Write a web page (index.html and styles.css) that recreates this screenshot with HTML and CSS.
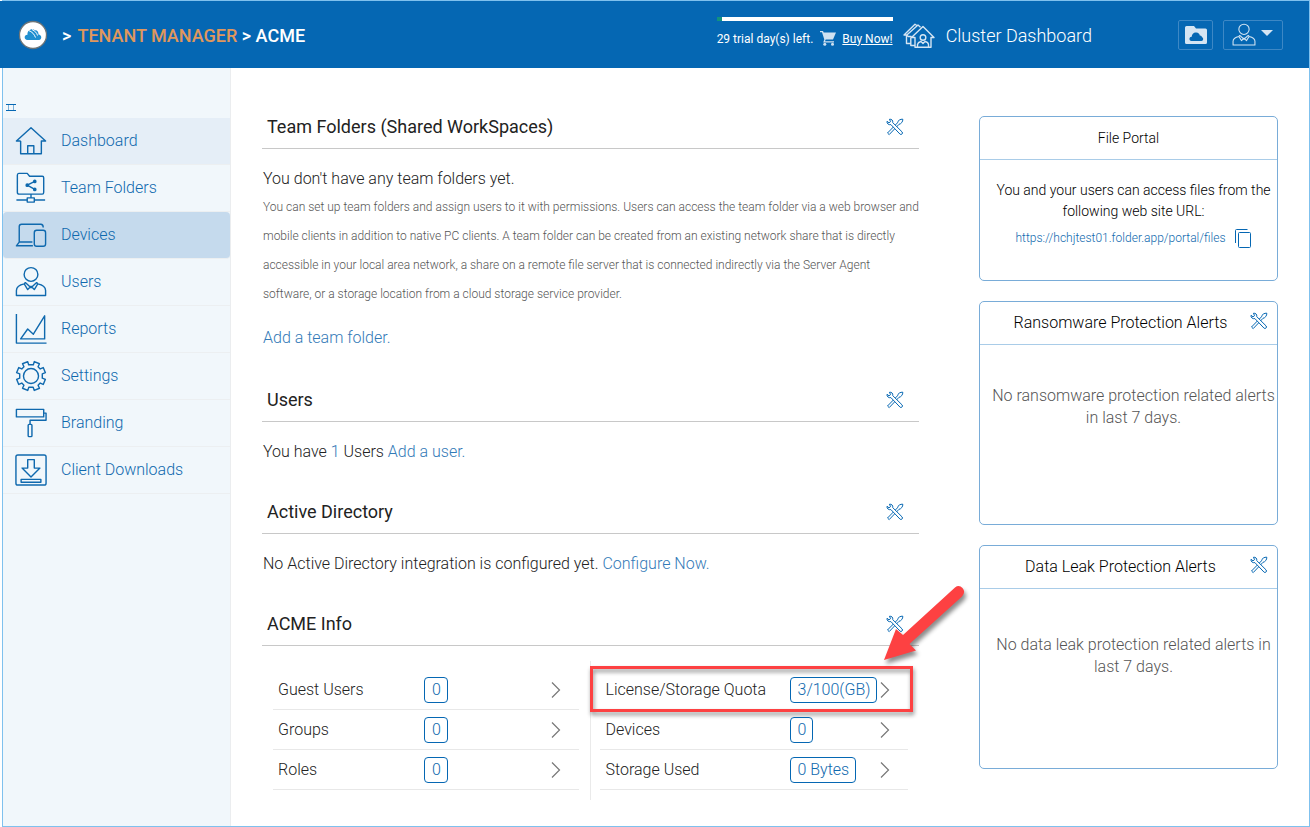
FILE: index.html
```html
<!DOCTYPE html>
<html lang="en">
<head>
<meta charset="utf-8">
<meta name="viewport" content="width=device-width, initial-scale=1">
<title>Tenant Manager - ACME</title>
<link rel="stylesheet" href="styles.css">
</head>
<body>
<svg class="defs" aria-hidden="true">
  <symbol id="tools" viewBox="0 0 18 18">
    <g fill="#fff" stroke="currentColor" stroke-width="1" stroke-linejoin="round">
      <path d="M1.500 15 L11.500 4.800 C11.500 2.800 14.500 .8 16.800 1.200 C17 3.500 15.200 6 13 6.300 L3.200 16.600 Z"/>
      <path d="M1 3.300 L3 4.800 L4.600 3.600 L3.400 1.300 C5.500 .8 7.300 2.500 6.700 4.600 L16.200 14 C17 15.500 15.700 17 14.200 16.300 L4.900 6.600 C2.700 7.200 .6 5.500 1 3.300 Z"/>
    </g>
  </symbol>
  <symbol id="chevron" viewBox="0 0 10 18"><path d="M1 1.500 8.500 9 1 16.500" fill="none" stroke="currentColor" stroke-width="1.200"/></symbol>
  <symbol id="person" viewBox="0 0 34 34">
    <g fill="none" stroke="currentColor" stroke-width="1.500" stroke-linejoin="round">
      <circle cx="17" cy="9" r="7.300"/>
      <path d="M11 17.500 L17 23 L23 17.500 M11 17.500 L9.800 19 L13.500 25 L17 21.500 L20.500 25 L24.200 19 L23 17.500 M9.800 19 C5 20 1.500 22 1.500 26 V31.300 H32.500 V26 C32.500 22 29 20 24.200 19"/>
    </g>
  </symbol>
</svg>
<div class="page">
  <header class="topbar">
    <a href="#" class="logo" aria-label="Home">
      <svg viewBox="0 0 30 30"><circle cx="15" cy="15" r="13.500" fill="#fff" stroke="#6c7478" stroke-width="1.300"/>
        <path d="M9.500 20 C5.500 19.500 6 14.500 9.500 14.700 C9 10 14 7.500 17 10.300 C19.200 10 20.600 12 20.500 14.500 C24 14.800 24.300 19.500 21 20 Z" fill="#1f8fd0"/>
        <path d="M10.500 10.500 C14 11.500 16.500 14.500 17.500 17.500 M14 9.500 C17 11 19 13 19.500 15.500" stroke="#fff" stroke-width="1" fill="none"/></svg>
    </a>
    <nav class="crumbs" aria-label="Breadcrumb"><span>&gt;</span> <a href="#">TENANT MANAGER</a> &gt; ACME</nav>
    <div class="trial">
      <div class="meter"><div class="meter-used"></div></div>
      <div class="trial-row">
        <span>29 trial day(s) left.</span>
        <svg class="cart" viewBox="0 0 16 15" fill="#cfe1f1"><path d="M0 0H3L3.700 1.500H16L13 8.500H5.700L5 10.200H14V11.500H3.200L4.300 8.600 2 1.300H0Z"/><circle cx="4.800" cy="13.300" r="1.500"/><circle cx="12.500" cy="13.300" r="1.500"/></svg>
        <a href="#">Buy Now!</a>
      </div>
    </div>
    <a href="#" class="cluster">
      <svg viewBox="0 0 32 26" fill="none" stroke="#d5e5f3" stroke-width="1.400" stroke-linejoin="round"><path d="M8.500 14.500 20 3.500 31 14.500H28V24.300H12V14.500ZM5 13.500 3.800 12 15 2 17.500 4.200M4 12H1L12 1.200 14.500 3M3.500 12.500V20.500H7.500M7.800 14.500V22.500H12M5 13.500H8.500"/><circle cx="20" cy="14.500" r="2.800"/><path d="M14.500 24V21.500C15 19.300 17 18.800 18 18.500L20 20.500 22 18.500C23.500 18.800 25.200 19.500 25.500 21.500V24"/></svg>
      <span>Cluster Dashboard</span>
    </a>
    <div class="actions">
      <button type="button" class="box" aria-label="Cloud files">
        <svg class="folder" viewBox="0 0 22 18"><path d="M0 1.500Q0 0 1.500 0H9L11 2.500H20.500Q22 2.500 22 4V16.500Q22 18 20.500 18H1.500Q0 18 0 16.500Z" fill="#d5e5f3"/><path d="M6.500 15C3.500 14.700 4 10.800 6.700 10.800 6.800 8 9 6.200 11.200 6.600 13.500 6.700 14.500 8 14.800 9.400 17 9.500 17 11 17 11.300 18.800 12 18.500 14.800 16.500 15Z" fill="#0567b3"/></svg>
      </button>
      <button type="button" class="box user" aria-label="Account menu">
        <svg class="who"><use href="#person"/></svg>
        <svg class="caret" viewBox="0 0 12 6"><path d="M0 0H12L6 6Z" fill="#d5e5f3"/></svg>
      </button>
    </div>
  </header>
  <div class="shell">
    <nav class="sidebar" aria-label="Main">
      <button type="button" class="fold" aria-label="Collapse menu"><svg viewBox="0 0 10 7" fill="none" stroke="currentColor"><path d="M0 .5H10M0 6.500H10"/><path d="M2.500 .5V6.500M7.500 .5V6.500" opacity=".5"/></svg></button>
      <a href="#" class="item current"><svg viewBox="0 0 34 34"><path d="M6 17H1.500L17 3 32.500 17H28V30.500H6V17M13.500 30.500V22H20V30.500"/></svg>Dashboard</a>
      <a href="#" class="item"><svg viewBox="0 0 34 34"><path d="M2.500 3.500Q2.500 1.500 4 1.500H13L15.500 4.500H29Q30.500 4.500 30.500 6V21.500Q30.500 23.500 29 23.500H4.500Q2.500 23.500 2.500 21.500ZM17 23.500V27.500M13 27.500H20.500V32H13ZM1.500 29.800H13M20.500 29.800H32M21 10 13 14 21 18.500"/><g fill="currentColor"><circle cx="21" cy="10" r="1.200"/><circle cx="13" cy="14" r="1.200"/><circle cx="21" cy="18.500" r="1.200"/></g></svg>Team Folders</a>
      <a href="#" class="item active"><svg viewBox="0 0 34 34"><path d="M4.500 24.500V8Q4.500 5.500 7 5.500H27.500Q30 5.500 30 9M4.500 24.500 1.500 28.500H19M4.500 24.500H18.500"/><rect x="20.500" y="12" width="12" height="17" rx="2.500"/></svg>Devices</a>
      <a href="#" class="item"><svg><use href="#person"/></svg>Users</a>
      <a href="#" class="item"><svg viewBox="0 0 34 34"><path d="M1.500 1V32H33.500M6 27.500 13.500 17 19.500 22.500 31.500 3V27.500Z"/></svg>Reports</a>
      <a href="#" class="item"><svg viewBox="0 0 34 34"><circle cx="17" cy="17" r="8"/><path d="M14.500 5 13.500 1.700 8 4 9.500 7.200 7.200 9.500 4 8 1.700 13.500 5 14.700V19.300L1.700 20.500 4 26 7.200 24.500 9.500 26.800 8 30 13.500 32.300 14.700 29H19.300L20.500 32.300 26 30 24.500 26.800 26.800 24.500 30 26 32.300 20.500 29 19.300V14.700L32.300 13.500 30 8 26.800 9.500 24.500 7.200 26 4 20.500 1.700 19.500 5Z"/></svg>Settings</a>
      <a href="#" class="item"><svg viewBox="0 0 34 34"><path d="M1.500 2.500H30.500V10.500H1.500ZM30.500 6.500H33V14H16V18.500"/><rect x="14" y="18.500" width="4" height="13" rx="1"/></svg>Branding</a>
      <a href="#" class="item"><svg viewBox="0 0 34 34"><rect x="1" y="1" width="32" height="32" rx="2"/><path d="M13.500 6H20.500V15H26.500L17 24.500 7.500 15H13.500ZM6.500 27H27.500V30H6.500Z"/></svg>Client Downloads</a>
    </nav>
    <main class="main">
      <div class="sections">
        <section>
          <div class="head"><h2>Team Folders (Shared WorkSpaces)</h2><button type="button" class="tool" aria-label="Team folder settings"><svg><use href="#tools"/></svg></button></div>
          <div class="body">
            <p>You don't have any team folders yet.</p>
            <p class="small">You can set up team folders and assign users to it with permissions. Users can access the team folder via a web browser and mobile clients in addition to native PC clients. A team folder can be created from an existing network share that is directly accessible in your local area network, a share on a remote file server that is connected indirectly via the Server Agent software, or a storage location from a cloud storage service provider.</p>
            <p class="add"><a href="#">Add a team folder.</a></p>
          </div>
        </section>
        <section>
          <div class="head"><h2>Users</h2><button type="button" class="tool" aria-label="User settings"><svg><use href="#tools"/></svg></button></div>
          <div class="body"><p>You have <a href="#">1</a> Users <a href="#">Add a user.</a></p></div>
        </section>
        <section>
          <div class="head"><h2>Active Directory</h2><button type="button" class="tool" aria-label="Active Directory settings"><svg><use href="#tools"/></svg></button></div>
          <div class="body"><p>No Active Directory integration is configured yet. <a href="#">Configure Now.</a></p></div>
        </section>
        <section class="info">
          <div class="head"><h2>ACME Info</h2><button type="button" class="tool" aria-label="ACME settings"><svg><use href="#tools"/></svg></button></div>
          <div class="stats">
            <ul class="left">
              <li><span>Guest Users</span><a href="#" class="count">0</a><svg class="chev"><use href="#chevron"/></svg></li>
              <li><span>Groups</span><a href="#" class="count">0</a><svg class="chev"><use href="#chevron"/></svg></li>
              <li><span>Roles</span><a href="#" class="count">0</a><svg class="chev"><use href="#chevron"/></svg></li>
            </ul>
            <ul class="right">
              <li class="marked"><span>License/Storage Quota</span><a href="#" class="count">3/100(GB)</a><svg class="chev"><use href="#chevron"/></svg></li>
              <li><span>Devices</span><a href="#" class="count">0</a><svg class="chev"><use href="#chevron"/></svg></li>
              <li><span>Storage Used</span><a href="#" class="count">0 Bytes</a><svg class="chev"><use href="#chevron"/></svg></li>
            </ul>
          </div>
          <svg class="arrow" viewBox="0 0 90 84" aria-hidden="true"><path d="M6 76 18 45 25 51 77 3.500Q81 .5 84.500 4 88 8 84 12.500L31.500 60 38 66.500Z" fill="#fd4142"/></svg>
        </section>
      </div>
      <aside class="cards">
        <article class="card portal">
          <h3>File Portal</h3>
          <div class="card-body">
            <p>You and your users can access files from the following web site URL:</p>
            <div class="url"><a href="#">https://hchjtest01.folder.app/portal/files</a>
              <button type="button" class="copy" aria-label="Copy link"><svg viewBox="0 0 17 19" fill="none" stroke="currentColor"><path d="M.5 14V1.500Q.5 .5 1.500 .5H12.500"/><rect x="3.500" y="3.500" width="12" height="15" rx="1"/></svg></button></div>
          </div>
        </article>
        <article class="card alert">
          <h3>Ransomware Protection Alerts</h3>
          <button type="button" class="tool" aria-label="Ransomware alert settings"><svg><use href="#tools"/></svg></button>
          <div class="card-body"><p>No ransomware protection related alerts in last 7 days.</p></div>
        </article>
        <article class="card alert leak">
          <h3>Data Leak Protection Alerts</h3>
          <button type="button" class="tool" aria-label="Data leak alert settings"><svg><use href="#tools"/></svg></button>
          <div class="card-body"><p>No data leak protection related alerts in last 7 days.</p></div>
        </article>
      </aside>
    </main>
  </div>
</div>
</body>
</html>
```

FILE: styles.css
```css
* { box-sizing: border-box; }
body {
  margin: 0;
  padding-left: 2px;
  background: #fff;
  color: #222;
  font: 300 16px/22px Roboto, "Liberation Sans", sans-serif;
}
h2, h3, p, ul { margin: 0; padding: 0; }
a { color: #337ab7; text-decoration: none; }
button { padding: 0; border: 0; background: none; color: #0567b3; font: inherit; cursor: pointer; }
svg { display: block; }
.defs { position: absolute; width: 0; height: 0; }

.page {
  display: flex;
  flex-direction: column;
  min-height: 100vh;
  border: 1px solid #7fc1ee;
}
.topbar {
  display: flex;
  align-items: center;
  height: 67px;
  padding: 0 26px 0 15px;
  background: #0567b3;
  box-shadow: -3px 0 #0567b3;
  color: #fff;
}
.logo svg { width: 30px; height: 30px; }
.crumbs { margin: 2px auto 0 14px; font-size: 18px; font-weight: 500; }
.crumbs span { margin-right: 2px; }
.crumbs a { color: #e0975c; }
.trial { width: 176px; margin-right: 10px; padding-bottom: 4px; font-size: 12px; font-weight: 400; }
.meter { height: 4px; margin-bottom: 8px; background: #fff; }
.meter-used { width: 5px; height: 4px; background: #12927f; }
.trial-row { display: flex; align-items: center; justify-content: space-between; line-height: 20px; white-space: nowrap; }
.trial-row a { color: #fff; text-decoration: underline; }
.cart { width: 16px; height: 15px; }
.cluster { display: flex; align-items: center; gap: 11px; margin: 3px 86px 0 0; color: #fff; font-size: 18px; }
.cluster svg { width: 32px; height: 26px; }
.actions { display: flex; gap: 10px; }
.box {
  display: flex;
  align-items: center;
  justify-content: center;
  width: 35px;
  height: 30px;
  border: 1px solid #3d88c5;
  border-radius: 2px;
  color: #d5e5f3;
}
.user { width: 60px; gap: 5px; padding-right: 2px; }
.folder { width: 22px; height: 18px; }
.who { width: 24px; height: 24px; }
.caret { width: 12px; height: 6px; margin-bottom: 4px; }

.shell { display: flex; flex: 1; }
.sidebar {
  flex: none;
  width: 228px;
  border-right: 1px solid #ebedef;
  background: #f1f7fb;
}
.fold { display: block; height: 50px; padding: 36px 3px 7px; }
.fold svg { width: 10px; height: 7px; }
.item {
  display: flex;
  align-items: center;
  gap: 14px;
  height: 47px;
  padding: 0 12px;
  border-bottom: 1px solid #eceff1;
  color: #0f69ae;
}
.item svg {
  width: 32px;
  height: 32px;
  fill: none;
  stroke: currentColor;
  stroke-width: 1.5;
  stroke-linejoin: round;
}
.current { background: #e5eef7; }
.active { border-radius: 4px; background: #c5daed; }

.main {
  display: grid;
  flex: 1;
  grid-template-columns: minmax(0, 1fr) 299px;
  gap: 60px;
  padding: 37px 31px 25px;
}
.head {
  display: flex;
  align-items: center;
  justify-content: space-between;
  height: 44px;
  padding: 0 15px 0 5px;
  border-bottom: 1px solid #c8c8c8;
}
.head h2 { font-size: 18px; font-weight: 400; }
.tool svg { width: 18px; height: 18px; }
.body { padding: 15px 0 24px 1px; line-height: 29px; }
.small { color: #555; font-size: 12px; }
.add { padding: 14px 0 2px; }
.info { position: relative; }
.stats { display: grid; grid-template-columns: 1fr 1fr; padding: 15px 11px 0; }
.stats ul { padding-top: 9px; list-style: none; }
.stats .left { padding-right: 11px; border-right: 1px solid #eaeaea; }
.stats .right { padding: 9px 0 10px 9px; }
.stats li {
  position: relative;
  display: grid;
  grid-template-columns: 146px 1fr 10px;
  align-items: center;
  height: 40px;
  padding: 0 18px 0 5px;
  border-bottom: 1px solid #e8e8e8;
}
.stats .right li { grid-template-columns: 184px 1fr 10px; padding-left: 6px; }
.count {
  justify-self: start;
  height: 26px;
  padding: 0 6px 0 7px;
  border: 1px solid #0567b3;
  border-radius: 4px;
  color: #0f69ae;
  line-height: 24px;
  white-space: nowrap;
}
.chev { width: 10px; height: 18px; color: #777; }
.marked::after {
  content: "";
  position: absolute;
  inset: -4px -5px -3px -10px;
  border: 3px solid #fd4142;
  filter: drop-shadow(1px 3px 2px rgba(0, 0, 0, .45));
}
.arrow {
  position: absolute;
  top: -18px;
  right: -49px;
  width: 90px;
  height: 84px;
  filter: drop-shadow(2px 4px 2px rgba(0, 0, 0, .45));
}

.cards { display: flex; flex-direction: column; gap: 20px; padding-top: 11px; }
.card { position: relative; border: 1px solid #79acd8; border-radius: 5px; color: #000; text-align: center; }
.card h3 { border-bottom: 1px solid #a9cce8; font-size: 16px; font-weight: 300; line-height: 42px; }
.card .tool { position: absolute; top: 10px; right: 9px; }
.card-body { padding-left: 10px; }
.portal { height: 165px; }
.portal h3 { font-size: 14px; }
.portal .card-body { padding: 20px 0 0 10px; font-size: 14px; line-height: 21px; }
.url { display: flex; align-items: center; justify-content: center; gap: 9px; margin-top: 6px; font-size: 12px; }
.url a { color: #0f69ae; }
.copy svg { width: 17px; height: 19px; }
.alert { height: 224px; }
.alert h3 { padding-right: 16px; }
.alert .card-body { padding-top: 40px; color: #555; }
.leak .card-body { padding-top: 45px; }
```
